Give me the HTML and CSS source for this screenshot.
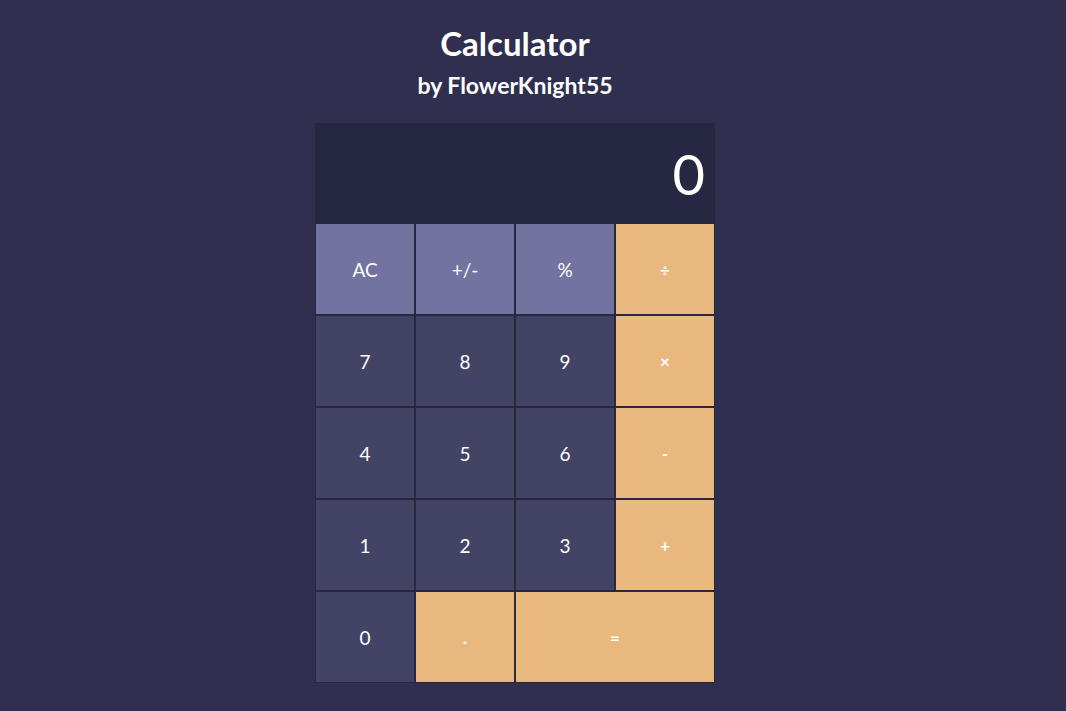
FILE: index.html
```html
<!DOCTYPE html>
<html>
<head>
<meta charset="utf-8">
<link rel="stylesheet" href="styles.css">
</head>
<body>
<header class="head">
  <h1 class="title">Calculator</h1>
  <h2 class="subtitle">by FlowerKnight55</h2>
</header>
<main class="calc">
  <div class="display">0</div>
  <div class="keys">
    <button class="key fn">AC</button>
    <button class="key fn">+/-</button>
    <button class="key fn">%</button>
    <button class="key op">÷</button>
    <button class="key num">7</button>
    <button class="key num">8</button>
    <button class="key num">9</button>
    <button class="key op">×</button>
    <button class="key num">4</button>
    <button class="key num">5</button>
    <button class="key num">6</button>
    <button class="key op">-</button>
    <button class="key num">1</button>
    <button class="key num">2</button>
    <button class="key num">3</button>
    <button class="key op">+</button>
    <button class="key num">0</button>
    <button class="key op">.</button>
    <button class="key op wide">=</button>
  </div>
</main>
</body>
</html>
```
FILE: styles.css
```css
html, body {
  margin: 0;
  padding: 0;
  background: #302f4f;
  font-family: "Lato", "Open Sans", sans-serif;
  color: #ffffff;
}
body {
  display: flex;
  flex-direction: column;
  align-items: center;
  min-height: 711px;
  padding-right: 36px;
}
.head {
  text-align: center;
  padding-top: 23px;
}
.title {
  margin: 0;
  font-size: 33px;
  line-height: 40px;
  font-weight: 700;
}
.subtitle {
  margin: 0;
  padding-top: 7px;
  font-size: 23px;
  line-height: 30px;
  font-weight: 700;
}
.calc {
  margin-top: 23px;
  width: 400px;
  background: #27283e;
}
.display {
  height: 100px;
  display: flex;
  align-items: center;
  justify-content: flex-end;
  padding-right: 10px;
  font-size: 56px;
  font-weight: 400;
  background: #262740;
}
.keys {
  display: grid;
  grid-template-columns: repeat(4, 98px);
  grid-auto-rows: 90px;
  gap: 2px;
  padding: 1px;
}
.key {
  border: none;
  margin: 0;
  padding: 0;
  font-family: "Lato", "Open Sans", sans-serif;
  font-size: 19px;
  color: #ffffff;
  display: flex;
  align-items: center;
  justify-content: center;
}
.fn { background: #7373a0; }
.num { background: #434366; }
.op { background: #e9b87f; font-size: 17px; font-weight: 700; }
.wide { grid-column: span 2; }
```
